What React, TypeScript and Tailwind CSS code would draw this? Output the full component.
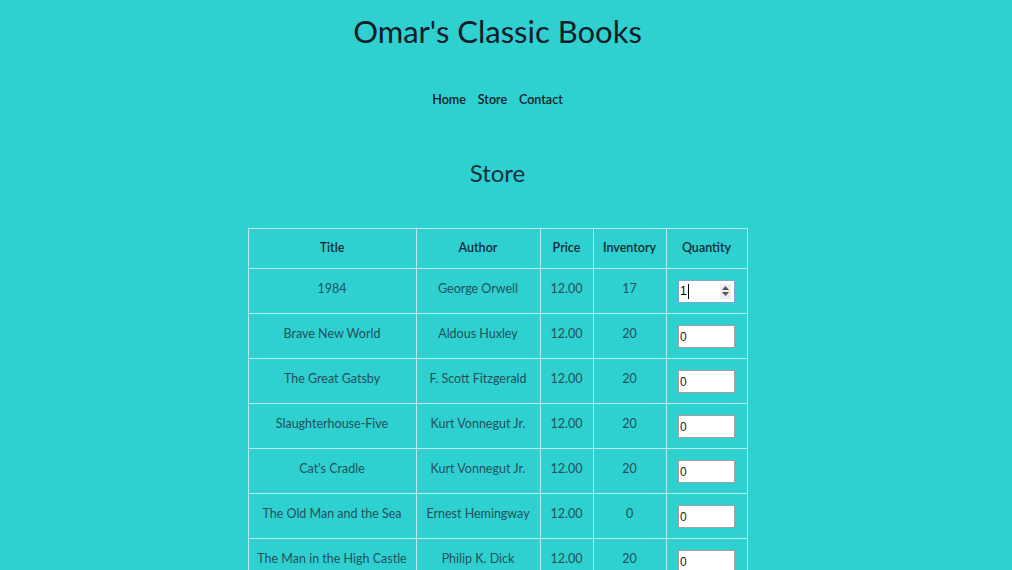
import React from "react";

const rows = [
  ["1984", "George Orwell", "12.00", "17", "1"],
  ["Brave New World", "Aldous Huxley", "12.00", "20", "0"],
  ["The Great Gatsby", "F. Scott Fitzgerald", "12.00", "20", "0"],
  ["Slaughterhouse-Five", "Kurt Vonnegut Jr.", "12.00", "20", "0"],
  ["Cat's Cradle", "Kurt Vonnegut Jr.", "12.00", "20", "0"],
  ["The Old Man and the Sea", "Ernest Hemingway", "12.00", "0", "0"],
  ["The Man in the High Castle", "Philip K. Dick", "12.00", "20", "0"],
];

export default function App() {
  return (
    <div
      className="w-[1012px] h-[570px] overflow-hidden bg-[#2fd0d0] text-[#0f2530]"
      style={{ fontFamily: "Lato, 'Noto Sans', sans-serif" }}
    >
      <div className="w-[995px]">
        <h1 className="text-center text-[31px] leading-[36px] pt-[13px] text-[#0c1c28]">
          Omar's Classic Books
        </h1>
        <nav className="flex justify-center gap-[12px] mt-[42px] text-[12.5px] font-semibold text-[#0c1c28] leading-[18px]">
          <span>Home</span>
          <span>Store</span>
          <span>Contact</span>
        </nav>
        <h2 className="text-center text-[24px] leading-[30px] mt-[49px] text-[#12303c]">Store</h2>
        <div className="flex justify-center mt-[40px]">
          <table className="table-fixed border-collapse text-[12.5px] text-[#22505a]">
            <colgroup>
              <col className="w-[168px]" />
              <col className="w-[124px]" />
              <col className="w-[53px]" />
              <col className="w-[73px]" />
              <col className="w-[81px]" />
            </colgroup>
            <thead>
              <tr className="h-[40px]">
                {["Title", "Author", "Price", "Inventory", "Quantity"].map((h) => (
                  <th
                    key={h}
                    className="border border-[#b9ecec] font-semibold text-[#0f2a35] text-center align-middle p-0"
                  >
                    {h}
                  </th>
                ))}
              </tr>
            </thead>
            <tbody>
              {rows.map((r, i) => (
                <tr key={i} className="h-[45px]">
                  <td className="border border-[#b9ecec] text-center p-0 pb-[3px]">{r[0]}</td>
                  <td className="border border-[#b9ecec] text-center p-0 pb-[3px]">{r[1]}</td>
                  <td className="border border-[#b9ecec] text-center p-0 pb-[3px]">{r[2]}</td>
                  <td className="border border-[#b9ecec] text-center p-0 pb-[3px]">{r[3]}</td>
                  <td className="border border-[#b9ecec] p-0">
                    <div className="flex justify-center">
                      {i === 0 ? (
                        <div className="relative w-[57px] h-[23px] bg-white border border-[#7da6d6] flex items-center">
                          <span
                            className="text-[12px] text-black pl-[1px] leading-none"
                            style={{ fontFamily: "'Liberation Sans', sans-serif" }}
                          >
                            1
                          </span>
                          <span className="w-[1px] h-[15px] bg-black ml-[1px]" />
                          <div className="absolute right-[3px] top-[3px] w-[11px] h-[15px] bg-[#eeeeee] flex flex-col items-center justify-center gap-[2px]">
                            <svg width="7" height="4" viewBox="0 0 7 4">
                              <path d="M0 4 L3.5 0 L7 4 Z" fill="#555" />
                            </svg>
                            <svg width="7" height="4" viewBox="0 0 7 4">
                              <path d="M0 0 L3.5 4 L7 0 Z" fill="#555" />
                            </svg>
                          </div>
                        </div>
                      ) : (
                        <div className="w-[57px] h-[23px] bg-white border border-[#a0a0a0] flex items-center">
                          <span
                            className="text-[12px] text-[#222] pl-[1px] pt-[2px] leading-none"
                            style={{ fontFamily: "'Liberation Sans', sans-serif" }}
                          >
                            {r[4]}
                          </span>
                        </div>
                      )}
                    </div>
                  </td>
                </tr>
              ))}
            </tbody>
          </table>
        </div>
      </div>
    </div>
  );
}
